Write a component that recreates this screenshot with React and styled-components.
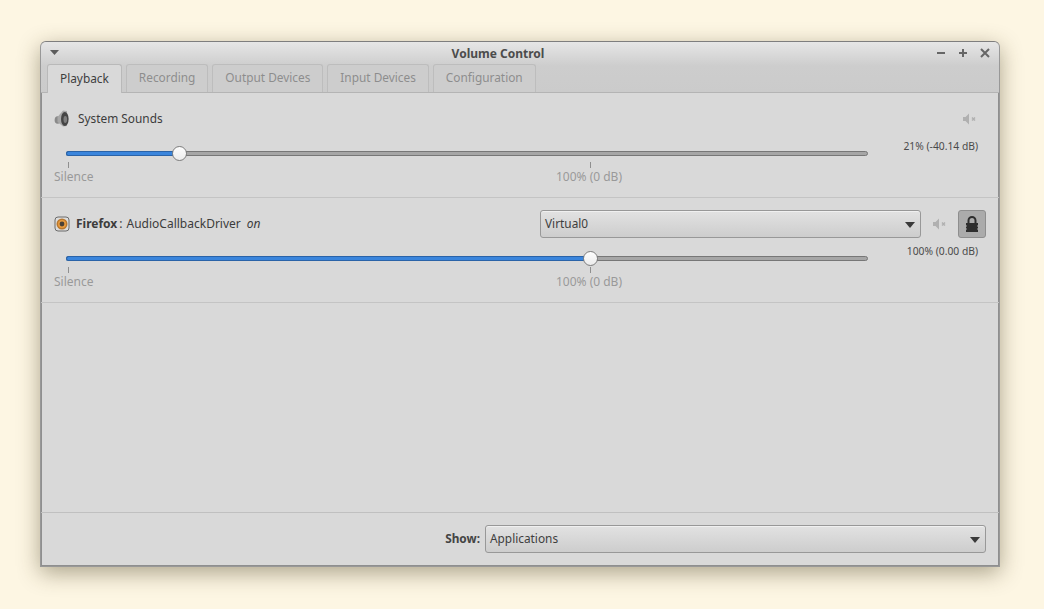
import React from "react";
import styled, { createGlobalStyle } from "styled-components";

const Global = createGlobalStyle`
  html, body { margin: 0; padding: 0; height: 100%; background: #fdf6e3; }
  body { font-family: "Noto Sans", "Open Sans", sans-serif; font-size: 11.85px; color: #3c3c3c; }
`;

const Desktop = styled.div`
  width: 1044px;
  height: 609px;
  padding: 41px 44px 42px 40px;
  box-sizing: border-box;
  overflow: hidden;
`;

const Window = styled.div`
  width: 100%;
  height: 100%;
  box-sizing: border-box;
  display: flex;
  flex-direction: column;
  background: #d9d9d9;
  border: 1px solid #989898;
  border-top-color: #7e7e7e;
  border-radius: 6px 6px 0 0;
  box-shadow: 0 6px 22px rgba(60, 50, 20, 0.42), inset 1px 0 0 #8f8f8f,
    inset -1px 0 0 #8f8f8f, inset 0 -1px 0 #8f8f8f;
`;

const Header = styled.div`
  height: 51px;
  flex: none;
  box-sizing: border-box;
  display: flex;
  flex-direction: column;
  border-radius: 5px 5px 0 0;
  background: linear-gradient(#e6e6e6 0, #cdcdcd 24px, #cbcbcb 100%);
  border-bottom: 1px solid #b4b4b4;
`;

const TitleBar = styled.div`
  height: 22px;
  flex: none;
  display: flex;
  align-items: center;
  justify-content: space-between;
  padding: 0 8px 0 9px;
  position: relative;
`;

const Title = styled.div`
  position: absolute;
  left: 0;
  right: 44px;
  top: 3px;
  text-align: center;
  font-weight: 700;
  font-size: 12px;
  color: #4c4c4c;
`;

const WinButtons = styled.div`
  display: flex;
  gap: 10px;
  color: #666;
`;

const TabStrip = styled.div`
  display: flex;
  gap: 4px;
  padding-left: 6px;
  height: 28px;
`;

const Tab = styled.div`
  box-sizing: border-box;
  height: ${(p) => (p.$active ? "29px" : "28px")};
  padding: ${(p) => (p.$active ? "5px 12px 0" : "4px 12px 0")};
  font-size: 11.85px;
  color: ${(p) => (p.$active ? "#3e3e3e" : "#8d8d8d")};
  background: ${(p) => (p.$active ? "#d9d9d9" : "#cdcdcd")};
  border: 1px solid ${(p) => (p.$active ? "#b9b9b9" : "#bdbdbd")};
  border-bottom: 0;
  border-radius: 3px 3px 0 0;
  position: relative;
  z-index: ${(p) => (p.$active ? 1 : 0)};
`;

const Stream = styled.section`
  height: 105px;
  box-sizing: border-box;
  flex: none;
  border-bottom: 1px solid #c4c4c4;
  position: relative;
`;

const StreamHead = styled.div`
  height: 50px;
  box-sizing: border-box;
  padding: ${(p) => p.$top}px 13px 0 13px;
  display: flex;
  align-items: center;
`;

const Name = styled.div`
  margin-left: ${(p) => p.$gap}px;
  padding-bottom: ${(p) => p.$lift || 0}px;
  font-size: ${(p) => p.$size || 11.85}px;
  white-space: pre;
  flex: 1;
`;

const Strong = styled.b`
  font-weight: 700;
  color: #3c3c3c;
  margin-right: 2px;
`;

const Colon = styled.span`
  margin-right: 4px;
`;

const Italic = styled.i`
  font-style: italic;
  margin-left: 6px;
`;

const Combo = styled.div`
  box-sizing: border-box;
  height: 28px;
  width: ${(p) => p.$w}px;
  display: flex;
  align-items: center;
  justify-content: space-between;
  padding: 0 5px ${(p) => p.$lift || 0}px 4px;
  border: 1px solid #989898;
  border-radius: 3px;
  background: linear-gradient(#e2e2e2, #cdcdcd);
  box-shadow: inset 0 1px 0 #f0f0f0;
  color: #3e3e3e;
`;

const Arrow = styled.span`
  width: 0;
  height: 0;
  border-left: 5.5px solid transparent;
  border-right: 5.5px solid transparent;
  border-top: 6px solid #3a3a3a;
  margin-top: 4px;
`;

const MuteSlot = styled.div`
  width: ${(p) => p.$w}px;
  display: flex;
  justify-content: center;
  padding-top: ${(p) => p.$down || 0}px;
`;

const LockButton = styled.div`
  box-sizing: border-box;
  width: 28px;
  height: 28px;
  display: flex;
  align-items: center;
  justify-content: center;
  border: 1px solid #8e8e8e;
  border-radius: 3px;
  background: #ababab;
`;

const Value = styled.div`
  position: absolute;
  right: 21px;
  top: 46px;
  font-size: 10.3px;
  line-height: 14px;
  color: #4a4a4a;
`;

const ScaleArea = styled.div`
  margin-left: 25px;
  width: 802px;
  position: relative;
  height: 52px;
`;

const Track = styled.div`
  position: absolute;
  left: 0;
  right: 0;
  top: 8px;
  height: 5px;
  box-sizing: border-box;
  border-radius: 3px;
  background: #a6a6a6;
  border: 1px solid #777;
`;

const Fill = styled.div`
  position: absolute;
  left: -1px;
  top: -1px;
  height: 5px;
  box-sizing: border-box;
  border-radius: 3px 0 0 3px;
  background: #3a85dc;
  border: 1px solid #2a63a8;
  border-right: 0;
`;

const Thumb = styled.div`
  position: absolute;
  top: 3px;
  width: 15px;
  height: 15px;
  box-sizing: border-box;
  margin-left: -7.5px;
  border-radius: 50%;
  border: 1px solid #7c7c7c;
  background: linear-gradient(#fdfdfd, #ececec);
`;

const Tick = styled.div`
  position: absolute;
  top: 19px;
  width: 1px;
  height: 6px;
  background: #8f8f8f;
`;

const TickLabel = styled.div`
  position: absolute;
  top: 26px;
  font-size: 12px;
  line-height: 16px;
  color: #999;
  white-space: nowrap;
  transform: ${(p) => (p.$center ? "translateX(-50%)" : "none")};
`;

const Spacer = styled.div`
  flex: 1;
`;

const Footer = styled.div`
  height: 54px;
  flex: none;
  box-sizing: border-box;
  border-top: 1px solid #c0c0c0;
  display: flex;
  align-items: center;
  justify-content: flex-end;
  padding: 0 13px 1px 0;
`;

const ShowLabel = styled.b`
  font-weight: 700;
  margin: 0 5px 2px 0;
  color: #444;
`;

const MenuIcon = () => (
  <svg width="9" height="6" viewBox="0 0 9 6">
    <path d="M0 0h9L4.500 5z" fill="#5c5c5c" />
  </svg>
);

const MinIcon = () => (
  <svg width="12" height="12" viewBox="0 0 12 12">
    <path d="M2 6h8" stroke="currentColor" strokeWidth="2" />
  </svg>
);

const MaxIcon = () => (
  <svg width="12" height="12" viewBox="0 0 12 12">
    <path d="M2 6h8M6 2v8" stroke="currentColor" strokeWidth="2" />
  </svg>
);

const CloseIcon = () => (
  <svg width="12" height="12" viewBox="0 0 12 12">
    <path d="M2 2l8 8M10 2l-8 8" stroke="currentColor" strokeWidth="2" />
  </svg>
);

const SpeakerIcon = () => (
  <svg width="16" height="18" viewBox="0 0 16 18">
    <ellipse cx="3.600" cy="11" rx="3" ry="3.800" fill="#8a8a8a" />
    <path d="M3.500 8L9 1.500l4 .5v15l-4 .5-5.500-4.500z" fill="#a8a8a8" />
    <ellipse cx="10.800" cy="10" rx="3.800" ry="7" fill="#444" />
    <ellipse cx="11.300" cy="10.500" rx="1.800" ry="3.400" fill="#7d7d7d" />
  </svg>
);

const FirefoxIcon = () => (
  <svg width="16" height="16" viewBox="0 0 16 16">
    <rect x="1" y="1" width="14" height="14" rx="3" fill="#dcdcdc" stroke="#6b6b6b" />
    <circle cx="8" cy="8" r="5.500" fill="#b9772d" />
    <circle cx="8" cy="8" r="4" fill="#e79a3e" />
    <circle cx="8" cy="8" r="2.400" fill="#4a4036" />
  </svg>
);

const MuteIcon = () => (
  <svg width="14" height="12" viewBox="0 0 14 12">
    <path d="M0 4h2.500L6 .5v11L2.500 8H0z" fill="#b0b0b0" />
    <path d="M9 4.500l3 3M12 4.500l-3 3" stroke="#b0b0b0" strokeWidth="1.500" />
  </svg>
);

const LockIcon = () => (
  <svg width="14" height="18" viewBox="0 0 14 18">
    <path d="M3.500 8V5.500a3.500 3.500 0 0 1 7 0V8" fill="none" stroke="#2e2e2e" strokeWidth="2" />
    <path d="M1 8h12v2.500h-1v1h1v2h-1v1h1V17H1v-2.500h1v-1H1v-2h1v-1H1z" fill="#2e2e2e" />
  </svg>
);

const TABS = ["Playback", "Recording", "Output Devices", "Input Devices", "Configuration"];

// volume is given as a share of the track width
function Scale({ volume }) {
  return (
    <ScaleArea>
      <Track>
        <Fill style={{ width: `${volume * 100}%` }} />
      </Track>
      <Thumb style={{ left: `${volume * 100}%` }} />
      <Tick style={{ left: 2 }} />
      <TickLabel style={{ left: -12 }}>Silence</TickLabel>
      <Tick style={{ left: 524 }} />
      <TickLabel $center style={{ left: 523 }}>
        100% (0 dB)
      </TickLabel>
    </ScaleArea>
  );
}

export default function App() {
  return (
    <Desktop>
      <Global />
      <Window>
        <Header>
          <TitleBar>
            <MenuIcon />
            <Title>Volume Control</Title>
            <WinButtons>
              <MinIcon />
              <MaxIcon />
              <CloseIcon />
            </WinButtons>
          </TitleBar>
          <TabStrip>
            {TABS.map((t, i) => (
              <Tab key={t} $active={i === 0}>
                {t}
              </Tab>
            ))}
          </TabStrip>
        </Header>

        <Stream>
          <StreamHead $top={0}>
            <SpeakerIcon />
            <Name $gap={8}>System Sounds</Name>
            <MuteSlot $w={32} $down={2}>
              <MuteIcon />
            </MuteSlot>
          </StreamHead>
          <Value>21% (-40.14 dB)</Value>
          <Scale volume={0.1415} />
        </Stream>

        <Stream>
          <StreamHead $top={2}>
            <FirefoxIcon />
            <Name $gap={6} $size={12} $lift={2}>
              <Strong>Firefox</Strong>
              <Colon>:</Colon>AudioCallbackDriver
              <Italic>on</Italic>
            </Name>
            <Combo $w={381} $lift={2}>
              Virtual0
              <Arrow />
            </Combo>
            <MuteSlot $w={37}>
              <MuteIcon />
            </MuteSlot>
            <LockButton>
              <LockIcon />
            </LockButton>
          </StreamHead>
          <Value>100% (0.00 dB)</Value>
          <Scale volume={0.6534} />
        </Stream>

        <Spacer />

        <Footer>
          <ShowLabel>Show:</ShowLabel>
          <Combo $w={501} $lift={2}>
            Applications
            <Arrow />
          </Combo>
        </Footer>
      </Window>
    </Desktop>
  );
}
